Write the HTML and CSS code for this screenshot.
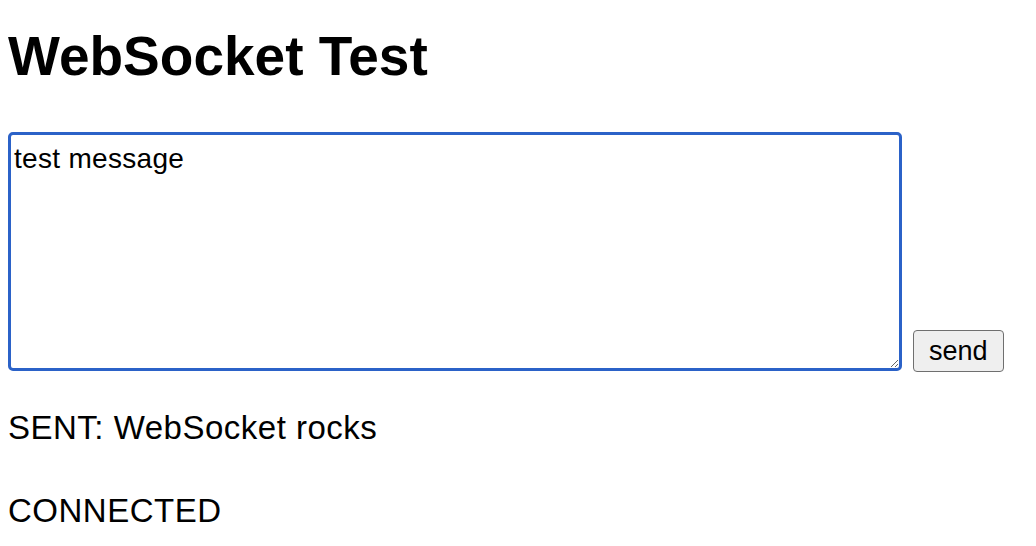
FILE: index.html
```html
<!DOCTYPE html>
<html lang="en">
<head>
<meta charset="utf-8">
<title>WebSocket Test</title>
<link rel="stylesheet" href="styles.css">
</head>
<body>
<div class="page">
  <h1 class="title">WebSocket Test</h1>
  <div class="composer">
    <textarea class="message">test message</textarea>
    <button class="send" type="button">send</button>
  </div>
  <div class="output">
    <p class="log">SENT: WebSocket rocks</p>
    <p class="log">CONNECTED</p>
  </div>
</div>
</body>
</html>
```

FILE: styles.css
```css
html, body {
  margin: 0;
  padding: 0;
  background: #ffffff;
}
.page {
  padding: 0 8px;
  font-family: "Liberation Sans", Arial, sans-serif;
  color: #000;
}
.title {
  margin: 25px 0 0;
  font-size: 55px;
  line-height: 62px;
  font-weight: bold;
}
.composer {
  display: flex;
  align-items: flex-end;
  gap: 11px;
  margin-top: 45px;
}
.message {
  box-sizing: border-box;
  width: 894px;
  height: 239px;
  margin: 0;
  padding: 8px 3px;
  border: 3px solid #2b62c8;
  border-radius: 5px;
  outline: none;
  font-family: "Liberation Sans", Arial, sans-serif;
  font-size: 28px;
  letter-spacing: 0.3px;
  line-height: 31px;
  color: #000;
  background: #fff;
}
.send {
  box-sizing: border-box;
  height: 42px;
  margin: 0 0 -1px;
  padding: 0 15px;
  border: 1px solid #6f6f6f;
  border-radius: 4px;
  background: #efefef;
  font-family: "Liberation Sans", Arial, sans-serif;
  font-size: 27px;
  line-height: 31px;
  color: #000;
}
.log {
  margin: 32px 0 0;
  font-size: 33px;
  letter-spacing: 0.5px;
  line-height: 50px;
}
.log + .log {
  margin-top: 33px;
}
```
